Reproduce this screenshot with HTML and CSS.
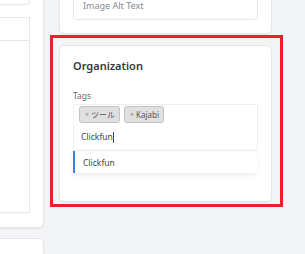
FILE: index.html
```html
<!DOCTYPE html>
<html lang="ja">
<head>
    <meta charset="UTF-8">
    <meta name="viewport" content="width=device-width, initial-scale=1.0">
    <title>Product - Organization</title>
    <link rel="stylesheet" href="styles.css">
</head>
<body>
    <div class="page">
        <div class="side-col">
            <div class="card main-card">
                <div class="top-box"></div>
                <div class="media-box">
                    <div class="media-head"></div>
                </div>
            </div>
            <div class="card next-card"></div>
        </div>

        <div class="right-col">
            <div class="card alt-card">
                <div class="alt-input">Image Alt Text</div>
            </div>

            <!-- 注釈の赤枠 -->
            <div class="highlight">
                <div class="card org-card">
                    <h2>Organization</h2>
                    <div class="field-label">Tags</div>
                    <div class="tag-box">
                        <div class="chips">
                            <span class="chip"><span class="chip-x">×</span>ツール</span>
                            <span class="chip"><span class="chip-x">×</span>Kajabi</span>
                        </div>
                        <div class="tag-input">Clickfun<span class="caret"></span></div>
                    </div>
                    <div class="suggest">
                        <div class="suggest-item">Clickfun</div>
                    </div>
                </div>
            </div>
        </div>
    </div>
</body>
</html>
```

FILE: styles.css
```css
:root {
    --page-bg: #f3f4f6;
    --card-border: #e4e6ea;
    --annot-red: #e8212b;
    --link-blue: #3b7de0;
}

body {
    margin: 0;
    background-color: var(--page-bg);
    font-family: 'Noto Sans', 'Noto Sans CJK JP', sans-serif;
    color: #333333;
}

.page {
    display: flex;
    gap: 15px;
    height: 254px;
    overflow: hidden;
}

.card {
    background-color: #ffffff;
    border: 1px solid var(--card-border);
    border-radius: 5px;
    box-shadow: 0 1px 2px rgba(0, 0, 0, 0.06);
    box-sizing: border-box;
    flex-shrink: 0;
}

/* left column */
.side-col {
    width: 44px;
    flex-shrink: 0;
    display: flex;
    flex-direction: column;
    gap: 10px;
}

.main-card {
    margin-top: -20px;
    margin-left: -20px;
    height: 248px;
    padding: 0 13px 14px 0;
    display: flex;
    flex-direction: column;
    gap: 12px;
    border-radius: 0 5px 5px 0;
}

.top-box {
    height: 23px;
    border: 1px solid var(--card-border);
    border-top: none;
    border-radius: 0 0 4px 4px;
}

.media-box {
    flex: 1;
    border: 1px solid var(--card-border);
}

.media-head {
    height: 22px;
    border-bottom: 1px solid var(--card-border);
}

.next-card {
    margin-left: -20px;
    height: 40px;
}

/* right column */
.right-col {
    width: 213px;
    flex-shrink: 0;
    display: flex;
    flex-direction: column;
}

.alt-card {
    margin-top: -20px;
    height: 54px;
    padding: 0 13px 13px;
    display: flex;
    flex-direction: column;
    justify-content: flex-end;
}

.alt-input {
    height: 27px;
    border: 1px solid var(--card-border);
    border-radius: 4px;
    padding: 0 9px;
    display: flex;
    align-items: center;
    font-size: 9px;
    color: #868b94;
}

.highlight {
    margin: 1px -11px 0 -9px;
    border: 3px solid var(--annot-red);
    padding: 7px 8px 2px 6px;
}

.org-card {
    height: 157px;
    padding: 12px 13px 0;
}

.org-card h2 {
    margin: 0;
    font-size: 11px;
    font-weight: 600;
    line-height: 16px;
    color: #34373c;
}

.field-label {
    margin-top: 16px;
    font-size: 8.5px;
    line-height: 12px;
    color: #666a70;
}

.tag-box {
    margin-top: 2px;
    border: 1px solid #eef0f2;
    border-bottom: none;
    padding: 1px 5px 0;
    height: 46px;
    box-sizing: border-box;
}

.chips {
    display: flex;
    gap: 4px;
}

.chip {
    height: 17px;
    box-sizing: border-box;
    padding: 0 4px 0 5px;
    display: flex;
    align-items: center;
    gap: 2px;
    background-color: #e0e0e0;
    border: 1px solid #c3c3c3;
    border-radius: 3px;
    font-size: 8px;
    color: #555555;
}

.chip-x {
    font-size: 7px;
    color: #8a8a8a;
}

.tag-input {
    margin-top: 4px;
    padding-left: 2px;
    font-size: 8.5px;
    line-height: 20px;
    color: #444444;
    display: flex;
    align-items: center;
}

.caret {
    width: 1px;
    height: 11px;
    background-color: #444444;
}

.suggest {
    width: 184px;
    background-color: #ffffff;
    border-top: 1px solid #eceef0;
    box-shadow: 0 3px 6px rgba(0, 0, 0, 0.07);
}

.suggest-item {
    height: 22px;
    border-left: 2px solid var(--link-blue);
    padding-left: 8px;
    display: flex;
    align-items: center;
    font-size: 8.5px;
    color: #444444;
}
```
